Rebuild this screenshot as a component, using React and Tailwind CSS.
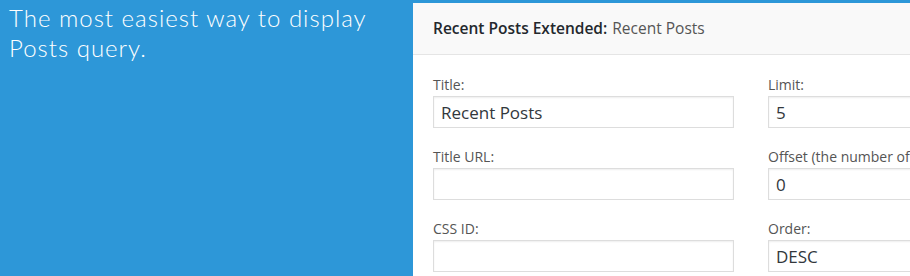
import React from 'react';

const fields = [
  { label: 'Title:', value: 'Recent Posts' },
  { label: 'Limit:', value: '5' },
  { label: 'Title URL:', value: '' },
  { label: 'Offset (the number of posts to skip):', value: '0' },
  { label: 'CSS ID:', value: '' },
  { label: 'Order:', value: 'DESC' },
];

const Field = ({ label, value }) => (
  <div className="flex flex-col">
    <label className="text-[14px] leading-[18px] text-[#555] mb-[2px] whitespace-nowrap">
      {label}
    </label>
    <input
      readOnly
      value={value}
      className="h-[32px] w-[301px] border border-[#ddd] bg-white px-[7px] text-[17px] text-[#32373c] shadow-[inset_0_1px_2px_rgba(0,0,0,0.07)] outline-none"
      style={{ fontFamily: 'inherit' }}
    />
  </div>
);

export default function App() {
  return (
    <div className="flex h-[276px] w-[910px] overflow-hidden bg-[#2d97d8]">
      <div
        className="w-[413px] shrink-0 pl-[9px] pt-[3px] text-[24px] leading-[30px] font-light tracking-[1px] text-white"
        style={{ fontFamily: 'Lato, "Open Sans", sans-serif' }}
      >
        The most easiest way to display
        <br />
        Posts query.
      </div>

      <div
        className="mt-[3px] min-w-0 flex-1 overflow-hidden bg-white"
        style={{ fontFamily: '"Open Sans", "Liberation Sans", sans-serif' }}
      >
        <div className="flex h-[52px] items-center border-b border-[#e5e5e5] bg-[#f9f9f9] px-[20px] text-[15.5px] whitespace-nowrap">
          <span className="font-semibold text-[#23282d]">Recent Posts Extended:</span>
          <span className="ml-[5px] text-[#555]">Recent Posts</span>
        </div>
        <div className="grid w-[700px] grid-cols-[301px_301px] gap-x-[34px] gap-y-[20px] px-[20px] pt-[21px]">
          {fields.map((f) => (
            <Field key={f.label} label={f.label} value={f.value} />
          ))}
        </div>
      </div>
    </div>
  );
}
